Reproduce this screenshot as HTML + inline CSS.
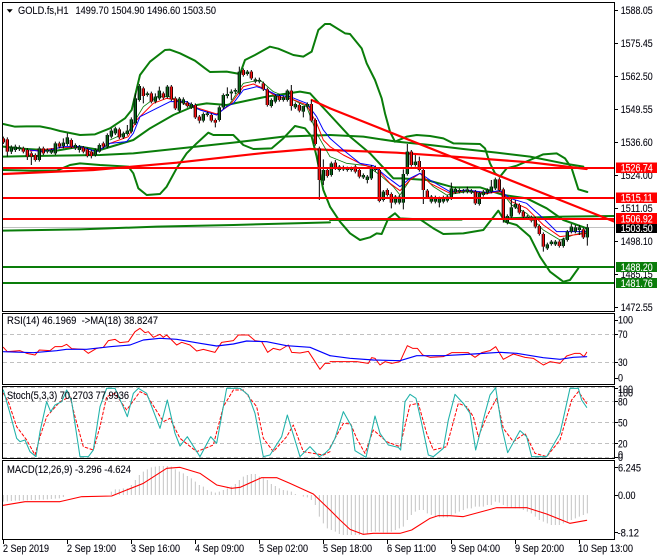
<!DOCTYPE html>
<html><head><meta charset="utf-8"><style>
html,body{margin:0;padding:0;background:#fff;width:660px;height:560px;overflow:hidden}
svg{display:block;position:absolute;left:0;top:0}
text{font-family:"Liberation Sans",sans-serif;font-size:10.6px;fill:#0a0a14;stroke:#0a0a14;stroke-width:.12}
text.w{fill:#fff;stroke:#fff}
.l{fill:none;stroke-linejoin:round;stroke-linecap:round}
</style></head><body>
<svg width="660" height="560" viewBox="0 0 660 560" xmlns="http://www.w3.org/2000/svg">
<rect width="660" height="560" fill="#fff"/>
<defs><clipPath id="m"><rect x="3" y="3" width="611" height="308"/></clipPath></defs>

<g clip-path="url(#m)">
<path d="M3 227.5H614" stroke="#c0c0c0" stroke-width="1"/>

<g transform="scale(.33333)">
<path id="ub" class="l" stroke="#0a7d0a" stroke-width="6" d="M10 372L45 380L80 379L120 379L150 385L180 393L240 405L285 403L330 385L375 355L395 330L420 225L450 185L495 150L510 149L540 160L585 182L615 205L630 216L680 215L720 222L735 180L765 165L810 140L835 146L880 165L910 170L935 155L955 90L975 72L990 72"/>
<path class="l" stroke="#0a7d0a" stroke-width="6" d="M10 510L90 512L170 512L210 495L240 490L300 495L385 500L400 520L415 565L440 585L480 582L500 560L530 505L560 460L590 430L625 398L640 405L700 405L730 435L760 447L815 445L850 415L885 378L915 385L935 410L950 470L970 570L990 620"/>
<path class="l" stroke="#0a7d0a" stroke-width="6" d="M10 440L80 447L170 452L240 440L300 450L350 435L400 420L450 385L520 345L590 315L620 310L680 315L750 300L800 290L900 275L930 280L990 345"/>
<path class="l" stroke="#0a7d0a" stroke-width="6" d="M10 470L100 468L300 465L400 460L540 445L700 428L850 410L990 405"/>
<path class="l" stroke="#0a7d0a" stroke-width="6" d="M10 692L240 688L470 680L700 675L990 667"/>
<path class="l" stroke="#ff0000" stroke-width="6.5" d="M10 522L280 510L530 488L800 458L930 447L990 450"/>
<path class="l" stroke="#ff0000" stroke-width="6.5" d="M935 300L990 325"/>
<path class="l" stroke="#0a7d0a" stroke-width="2.5" d="M330 420L385 395L430 320L470 290L510 290L570 320L650 345L690 310L730 250L780 240L820 275L870 295L920 320L950 400L990 470"/>
<path class="l" stroke="#ff0000" stroke-width="3" d="M90 453L190 442L240 442L280 460L330 430L385 410L410 360L460 310L500 295L520 298L580 320L650 342L690 315L730 260L760 252L790 265L830 290L870 295L920 315L950 370L970 420L990 440"/>
<path class="l" stroke="#0000ff" stroke-width="3" d="M90 450L130 455L190 440L240 440L290 455L330 430L380 425L400 400L420 350L470 325L510 305L560 305L600 330L650 345L680 320L700 310L730 270L770 260L800 270L830 285L870 290L920 310L950 350L970 390L990 415"/>
<path stroke="#000" stroke-width="3" fill="none" d="M10 410V432M22 412V470M34 436V462M46 434V456M58 436V453M70 440V460M82 444V480M94 455V495M106 460V485M118 440V485M130 440V465M142 445V460M154 445V462M166 425V465M178 425V445M190 415V445M202 400V438M214 415V445M226 430V450M238 435V458M250 438V460M262 443V472M274 450V475M286 445V470M298 430V458M310 425V445M322 400V445M334 385V415M346 380V405M358 383V417M370 395V417M382 375V407M394 352V400M406 280V375M418 252V305M430 260V310M442 275V290M454 275V310M466 280V310M478 260V300M490 275V298M502 255V295M514 255V303M526 290V330M538 291V337M550 292V315M562 303V323M574 307V327M586 310V357M598 345V370M610 337V367M622 335V350M634 340V367M646 355V382M658 317V365M670 280V327M682 262V295M694 268V300M706 265V282M718 200V283M730 205V230M742 210V227M754 210V240M766 233V250M778 233V250M790 245V273M802 263V320M814 295V323M826 283V310M838 283V305M850 287V305M862 268V305M874 255V332M886 307V327M898 310V337M910 318V352M922 307V325M934 300V367M946 355V437M958 440V600M970 478V555M982 505V533"/>
<defs>
<path id="bu" d="M34 442V455M46 440V450M58 442V447M118 445V480M142 450V455M154 450V458M166 430V460M190 428V438M202 412V432M226 435V445M238 440V450M286 450V465M298 435V455M322 405V440M334 392V410M346 385V400M370 400V412M382 392V402M394 358V395M406 295V370M418 258V300M442 280V285M466 290V305M478 272V295M502 260V290M538 296V332M550 298V310M574 312V322M610 342V362M622 340V345M658 322V360M670 285V322M682 282V288M694 275V280M706 270V275M718 215V278M742 215V222M766 238V245M778 240V245M814 300V318M826 288V305M850 292V300M862 272V300M886 312V322M910 318V335M922 312V320M970 510V542"/>
<path id="be" d="M10 415V427M22 418V455M70 445V455M82 450V470M94 460V470M106 465V480M130 445V460M178 430V440M214 420V440M250 443V455M262 448V468M274 455V468M310 430V440M358 388V412M430 265V288M454 280V305M490 280V293M514 260V298M526 295V325M562 308V318M586 315V352M598 350V362M634 345V362M646 360V368M730 210V225M754 215V235M790 250V268M802 268V315M838 288V300M874 272V318M898 315V332M934 312V362M946 360V432M958 445V540M982 510V528"/>
</defs>
<use href="#bu" stroke="#000" stroke-width="10"/>
<use href="#be" stroke="#000" stroke-width="10"/>
<use href="#bu" stroke="#0a6a1a" stroke-width="5"/>
<use href="#be" stroke="#ff1010" stroke-width="5"/>
</g>

<g transform="translate(330 0) scale(.33333)">
<path class="l" stroke="#0a7d0a" stroke-width="6" d="M0 72L45 100L60 102L95 145L110 190L135 240L155 295L165 340L180 395L195 425L230 410L260 405L300 408L340 415L370 430L450 432L465 445L480 490L495 520L510 530L530 505L560 497L600 480L640 463L680 460L705 475L725 505L745 568L772 576"/>
<path class="l" stroke="#0a7d0a" stroke-width="6" d="M0 620L30 665L60 700L90 720L120 712L140 700L155 702L175 655L195 640L210 655L270 658L310 685L340 702L400 700L460 690L505 632L525 665L560 675L600 710L630 770L660 815L700 845L720 840L745 805"/>
<path class="l" stroke="#0a7d0a" stroke-width="6" d="M0 345L60 410L120 460L190 535L215 535L290 540L370 562L450 562L520 585L590 595L650 625L700 660L770 685"/>
<path class="l" stroke="#0a7d0a" stroke-width="6" d="M0 405L100 410L200 425L300 435L400 447L500 458L600 470L700 490L760 500"/>
<path class="l" stroke="#0a7d0a" stroke-width="6" d="M0 660L395 659M520 655L700 650L853 648"/>
<path class="l" stroke="#ff0000" stroke-width="6.5" d="M0 450L200 458L400 472L600 487L770 507"/>
<path class="l" stroke="#ff0000" stroke-width="6.5" d="M0 325L853 665"/>
<path class="l" stroke="#0a7d0a" stroke-width="2.5" d="M0 470L50 490L110 497L150 525L190 560L210 585L240 540L270 520L310 560L350 585L410 575L470 582L510 570L545 615L590 640L640 690L690 720L730 705L770 695"/>
<path class="l" stroke="#ff0000" stroke-width="3" d="M0 440L40 465L100 495L140 505L180 550L210 572L240 540L270 520L300 550L360 580L410 572L470 580L510 575L545 605L590 625L640 675L690 710L770 700"/>
<path class="l" stroke="#0000ff" stroke-width="3" d="M0 415L40 450L90 490L130 497L170 530L210 560L240 535L270 520L300 540L360 575L410 570L470 578L510 572L540 595L590 610L640 655L680 695L730 695L770 695"/>
<path stroke="#000" stroke-width="3" fill="none" d="M4 485V530M16 480V510M28 495V515M40 497V513M52 500V515M64 500V515M76 495V520M88 505V535M100 520V537M112 525V550M124 495V540M136 497V515M148 505V607M160 570V605M172 565V590M184 577V625M196 585V613M208 585V613M220 508V628M232 432V527M244 450V500M256 465V500M268 470V515M280 505V612M292 567V597M304 585V610M316 587V610M328 590V622M340 587V610M352 585V607M364 548V600M376 562V582M388 565V580M400 567V580M412 560V580M424 567V582M436 570V615M448 575V617M460 570V590M472 565V583M484 540V580M496 533V570M508 533V575M520 563V668M532 643V673M544 595V655M556 600V627M568 610V643M580 630V655M592 645V660M604 647V667M616 650V685M628 673V707M640 697V755M652 728V750M664 720V737M676 720V738M688 720V743M700 713V743M712 690V725M724 672V700M736 675V700M748 675V705M760 683V717M772 672V737"/>
<defs>
<path id="bu2" d="M4 490V525M28 500V510M40 502V508M52 505V510M64 505V510M100 525V532M112 530V540M124 500V535M136 502V510M160 575V600M196 590V608M208 590V608M220 522V608M232 455V522M256 485V495M304 590V605M316 592V605M328 595V608M340 592V605M352 590V602M364 565V595M376 567V577M388 570V575M400 572V575M412 568V575M424 572V577M448 580V612M460 575V585M472 570V578M484 560V575M496 538V565M532 648V668M544 622V650M556 612V622M592 650V655M652 733V745M664 725V732M676 725V733M700 718V738M712 695V720M724 680V695M736 682V695M748 682V690M772 682V712"/>
<path id="be2" d="M16 488V505M76 500V515M88 510V530M148 510V603M172 570V585M184 582V608M244 455V495M268 483V510M280 510V570M292 572V592M436 575V610M508 538V570M520 568V660M568 615V638M580 635V650M604 652V662M616 655V680M628 678V702M640 702V740M688 725V738M760 688V712"/>
</defs>
<use href="#bu2" stroke="#000" stroke-width="10"/>
<use href="#be2" stroke="#000" stroke-width="10"/>
<use href="#bu2" stroke="#0a6a1a" stroke-width="5"/>
<use href="#be2" stroke="#ff1010" stroke-width="5"/>
</g>

<path d="M3 168H614M3 198H614M3 219H614" stroke="#ff0000" stroke-width="2" fill="none"/>
<path d="M3 267H614M3 283H614" stroke="#0a7d0a" stroke-width="2" fill="none"/>
</g>

<path d="M3 334.5H614M3 362.5H614" stroke="#c0c0c0" stroke-width="1" stroke-dasharray="4 3"/>
<g transform="translate(0 310) scale(.33333)">
<path class="l" stroke="#ff0000" stroke-width="3" d="M10 112L22 125L60 122L80 130L105 135L118 120L150 122L165 110L185 110L200 103L215 116L250 118L265 130L290 115L310 112L325 92L345 88L360 98L385 95L405 65L420 55L435 68L445 65L460 82L480 73L490 82L500 75L515 90L530 105L545 97L570 105L590 123L610 118L645 127L665 97L700 92L715 75L745 75L765 92L785 95L803 127L820 115L840 120L865 105L875 127L900 129L925 124L960 178L975 160L990 160"/>
<path class="l" stroke="#0000ff" stroke-width="3.5" d="M10 125L100 128L170 122L200 118L260 118L330 110L390 105L430 90L480 85L530 88L600 100L650 108L700 102L740 93L800 95L860 107L930 112L990 137"/>
</g>
<g transform="translate(330 310) scale(.33333)">
<path class="l" stroke="#ff0000" stroke-width="3" d="M0 155L80 155L115 160L125 143L135 145L150 165L165 155L185 160L210 155L232 107L248 115L262 115L278 135L300 142L340 140L365 128L415 128L435 142L455 128L480 122L497 110L520 148L550 132L585 142L610 145L640 165L660 155L690 160L710 138L735 130L750 130L762 140L770 127"/>
<path class="l" stroke="#0000ff" stroke-width="3.5" d="M0 137L60 145L130 150L210 152L260 137L340 137L430 132L510 127L560 130L640 143L690 148L730 142L770 140"/>
</g>

<path d="M3 387.5H614M3 401.5H614M3 422.5H614M3 443.5H614M3 457.5H614" stroke="#c0c0c0" stroke-width="1" stroke-dasharray="4 3"/>
<g transform="translate(0 310) scale(.33333)">
<path class="l" stroke="#ff0000" stroke-width="3" stroke-dasharray="8 7" d="M10 250L25 275L50 350L80 390L105 435L120 380L140 320L180 275L210 260L225 320L250 410L280 420L300 350L320 260L345 250L380 300L420 245L440 255L490 335L510 325L540 385L590 425L640 405L670 290L700 240L730 240L770 290L790 385L820 425L860 380L880 345L910 425L970 435L990 425"/>
<path class="l" stroke="#20b2aa" stroke-width="3.2" d="M10 240L30 310L50 385L60 395L75 390L90 425L108 440L120 365L140 275L152 305L165 285L185 275L200 240L215 275L240 440L265 440L280 420L300 290L320 235L345 235L365 280L382 320L400 250L415 235L440 250L480 355L502 270L525 370L540 408L562 380L600 440L632 380L650 400L680 235L720 235L745 255L765 310L790 440L810 435L845 380L862 315L900 440L930 410L958 440L975 430L990 415"/>
</g>
<g transform="translate(330 310) scale(.33333)">
<path class="l" stroke="#ff0000" stroke-width="3" stroke-dasharray="8 7" d="M0 412L40 340L62 342L80 385L105 430L130 360L170 395L210 410L240 285L265 280L290 370L310 420L350 410L385 280L410 290L430 320L445 380L470 320L500 265L520 355L550 395L585 370L615 430L650 440L690 390L725 270L745 245L770 280"/>
<path class="l" stroke="#20b2aa" stroke-width="3.2" d="M0 415L15 385L40 305L65 350L75 422L108 442L135 318L150 370L175 405L205 412L212 420L225 275L240 253L258 265L275 340L295 435L310 440L340 415L355 330L375 253L400 280L420 310L437 420L465 310L480 255L497 233L515 350L533 428L570 362L590 380L605 440L650 440L690 370L720 235L745 235L755 270L770 292"/>
</g>

<g transform="translate(0 310) scale(.33333)">
<path stroke="#c4c4c4" stroke-width="3" fill="none" d="M10 555V575M22 555V574M34 555V573M46 555V572M58 555V572M70 555V571M82 555V571M94 555V570M106 555V570M118 555V569M130 555V569M142 555V568M154 555V567M166 555V566M178 555V565M190 555V561M334 555V545M346 555V538M358 555V538M370 555V535M382 555V535M394 555V525M406 555V510M418 555V495M430 555V485M442 555V478M454 555V472M466 555V470M478 555V468M490 555V468M502 555V468M514 555V470M526 555V478M538 555V485M550 555V490M562 555V498M574 555V505M586 555V515M598 555V525M610 555V530M622 555V540M634 555V545M646 555V548M658 555V545M670 555V540M682 555V535M694 555V530M706 555V522M718 555V510M730 555V500M742 555V495M754 555V492M766 555V492M778 555V500M790 555V505M802 555V510M814 555V522M826 555V528M838 555V535M850 555V540M862 555V542M874 555V545M886 555V552M910 555V560M922 555V562M934 555V570M946 555V585M958 555V620M970 555V640M982 555V655"/>
<path class="l" stroke="#ff0000" stroke-width="3.2" d="M10 586L75 575L180 575L245 560L335 558L430 520L500 475L540 472L600 490L650 525L695 535L720 532L785 503L830 503L870 520L940 552L990 600"/>
</g>
<g transform="translate(330 310) scale(.33333)">
<path stroke="#c4c4c4" stroke-width="3" fill="none" d="M4 555V660M16 555V665M28 555V672M40 555V675M52 555V675M64 555V675M76 555V675M88 555V675M100 555V675M112 555V672M124 555V665M136 555V665M148 555V665M160 555V668M172 555V668M184 555V665M196 555V660M208 555V655M220 555V650M232 555V630M244 555V615M256 555V605M268 555V600M280 555V600M292 555V610M304 555V615M316 555V620M328 555V622M340 555V622M352 555V622M364 555V615M376 555V610M388 555V605M400 555V600M412 555V595M424 555V595M436 555V590M448 555V590M460 555V590M472 555V585M484 555V585M496 555V575M508 555V578M520 555V585M532 555V590M544 555V592M556 555V595M568 555V595M580 555V600M592 555V605M604 555V610M616 555V620M628 555V630M640 555V635M652 555V640M664 555V645M676 555V645M688 555V645M700 555V640M712 555V635M724 555V630M736 555V625M748 555V620M760 555V615M772 555V610"/>
<path class="l" stroke="#ff0000" stroke-width="3.2" d="M0 600L30 630L60 658L100 673L130 670L210 670L245 660L300 625L325 617L360 617L400 620L500 593L590 593L650 612L720 640L770 631"/>
</g>

<g fill="none" stroke="#000" stroke-width="1">
<path d="M2.5 2.5H614.5V311.5H2.5Z"/>
<path d="M2.5 313.5H614.5V384.5H2.5Z"/>
<path d="M2.5 386.5H614.5V458.5H2.5Z"/>
<path d="M2.5 460.5H614.5V539.5H2.5Z"/>
<path d="M614.5 10.5H618M614.5 43.5H618M614.5 76.5H618M614.5 109.5H618M614.5 142.5H618M614.5 175.5H618M614.5 208.5H618M614.5 241.5H618M614.5 274.5H618M614.5 307.5H618M614.5 320.5H618M614.5 334.5H618M614.5 362.5H618M614.5 378.5H618M614.5 388.5H618M614.5 401.5H618M614.5 422.5H618M614.5 443.5H618M614.5 457.5H618M614.5 467.5H618M614.5 495.5H618M614.5 532.5H618"/>
<path d="M3.5 539.5V544M67.5 539.5V544M131.5 539.5V544M195.5 539.5V544M259.5 539.5V544M323.5 539.5V544M387.5 539.5V544M451.5 539.5V544M515.5 539.5V544M579.5 539.5V544"/>
</g>

<path d="M6.7 9.3H12.7L9.7 12.7Z" fill="#000"/>
<text x="18" y="14" textLength="50.5" lengthAdjust="spacingAndGlyphs">GOLD.fs,H1</text>
<text x="75.5" y="14" textLength="140.5" lengthAdjust="spacingAndGlyphs">1499.70 1504.90 1496.60 1503.50</text>
<text x="7" y="324" textLength="151" lengthAdjust="spacingAndGlyphs">RSI(14) 46.1969 &#160;-&gt;MA(18) 38.8247</text>
<text x="7" y="399" textLength="122" lengthAdjust="spacingAndGlyphs">Stoch(5,3,3) 70,2703 77,9936</text>
<text x="7" y="473" textLength="124" lengthAdjust="spacingAndGlyphs">MACD(12,26,9) -3.296 -4.624</text>

<g>
<text x="620.7" y="14" textLength="32" lengthAdjust="spacingAndGlyphs">1588.05</text>
<text x="620.7" y="47" textLength="32" lengthAdjust="spacingAndGlyphs">1575.45</text>
<text x="620.7" y="80" textLength="32" lengthAdjust="spacingAndGlyphs">1562.50</text>
<text x="620.7" y="113" textLength="32" lengthAdjust="spacingAndGlyphs">1549.55</text>
<text x="620.7" y="146" textLength="32" lengthAdjust="spacingAndGlyphs">1536.60</text>
<text x="620.7" y="179" textLength="32" lengthAdjust="spacingAndGlyphs">1524.00</text>
<text x="620.7" y="212" textLength="32" lengthAdjust="spacingAndGlyphs">1511.05</text>
<text x="620.7" y="245" textLength="32" lengthAdjust="spacingAndGlyphs">1498.10</text>
<text x="620.7" y="278" textLength="32" lengthAdjust="spacingAndGlyphs">1485.15</text>
<text x="620.7" y="311" textLength="32" lengthAdjust="spacingAndGlyphs">1472.55</text>
</g>
<rect x="616" y="162.5" width="41" height="10.5" fill="#ff0000"/>
<rect x="616" y="192.5" width="41" height="10.5" fill="#ff0000"/>
<rect x="616" y="213" width="41" height="11" fill="#ff0000"/>
<rect x="616" y="224" width="41" height="9" fill="#000"/>
<rect x="616" y="262" width="41" height="10" fill="#0a7d0a"/>
<rect x="616" y="278" width="41" height="10" fill="#0a7d0a"/>
<text class="w" x="620.7" y="171.5" textLength="32" lengthAdjust="spacingAndGlyphs">1526.74</text>
<text class="w" x="620.7" y="201.5" textLength="32" lengthAdjust="spacingAndGlyphs">1515.11</text>
<text class="w" x="620.7" y="222.5" textLength="32" lengthAdjust="spacingAndGlyphs">1506.92</text>
<text class="w" x="620.7" y="232" textLength="32" lengthAdjust="spacingAndGlyphs">1503.50</text>
<text class="w" x="620.7" y="271" textLength="32" lengthAdjust="spacingAndGlyphs">1488.20</text>
<text class="w" x="620.7" y="287" textLength="32" lengthAdjust="spacingAndGlyphs">1481.76</text>

<text x="618" y="323.5" textLength="15" lengthAdjust="spacingAndGlyphs">100</text>
<text x="618" y="338" textLength="9.5" lengthAdjust="spacingAndGlyphs">70</text>
<text x="618" y="366" textLength="9.5" lengthAdjust="spacingAndGlyphs">30</text>
<text x="618" y="381.5" textLength="5" lengthAdjust="spacingAndGlyphs">0</text>
<text x="618" y="393" textLength="15" lengthAdjust="spacingAndGlyphs">100</text>
<text x="618" y="396.5" textLength="15" lengthAdjust="spacingAndGlyphs">100</text>
<text x="618" y="405.5" textLength="9.5" lengthAdjust="spacingAndGlyphs">80</text>
<text x="618" y="426.5" textLength="9.5" lengthAdjust="spacingAndGlyphs">50</text>
<text x="618" y="447.5" textLength="9.5" lengthAdjust="spacingAndGlyphs">20</text>
<text x="618" y="458.5" textLength="5" lengthAdjust="spacingAndGlyphs">0</text>
<text x="618" y="461" textLength="5" lengthAdjust="spacingAndGlyphs">0</text>
<text x="618" y="471.5" textLength="23" lengthAdjust="spacingAndGlyphs">6.245</text>
<text x="618" y="499" textLength="17.5" lengthAdjust="spacingAndGlyphs">0.00</text>
<text x="617.5" y="536.5" textLength="21.5" lengthAdjust="spacingAndGlyphs">-8.12</text>

<text x="3" y="552" textLength="46" lengthAdjust="spacingAndGlyphs">2 Sep 2019</text>
<text x="67" y="552" textLength="49" lengthAdjust="spacingAndGlyphs">2 Sep 19:00</text>
<text x="131" y="552" textLength="49" lengthAdjust="spacingAndGlyphs">3 Sep 16:00</text>
<text x="195" y="552" textLength="49" lengthAdjust="spacingAndGlyphs">4 Sep 09:00</text>
<text x="259" y="552" textLength="49" lengthAdjust="spacingAndGlyphs">5 Sep 02:00</text>
<text x="323" y="552" textLength="49" lengthAdjust="spacingAndGlyphs">5 Sep 18:00</text>
<text x="387" y="552" textLength="49" lengthAdjust="spacingAndGlyphs">6 Sep 11:00</text>
<text x="451" y="552" textLength="49" lengthAdjust="spacingAndGlyphs">9 Sep 04:00</text>
<text x="515" y="552" textLength="49" lengthAdjust="spacingAndGlyphs">9 Sep 20:00</text>
<text x="578" y="552" textLength="55" lengthAdjust="spacingAndGlyphs">10 Sep 13:00</text>
</svg>
</body></html>
